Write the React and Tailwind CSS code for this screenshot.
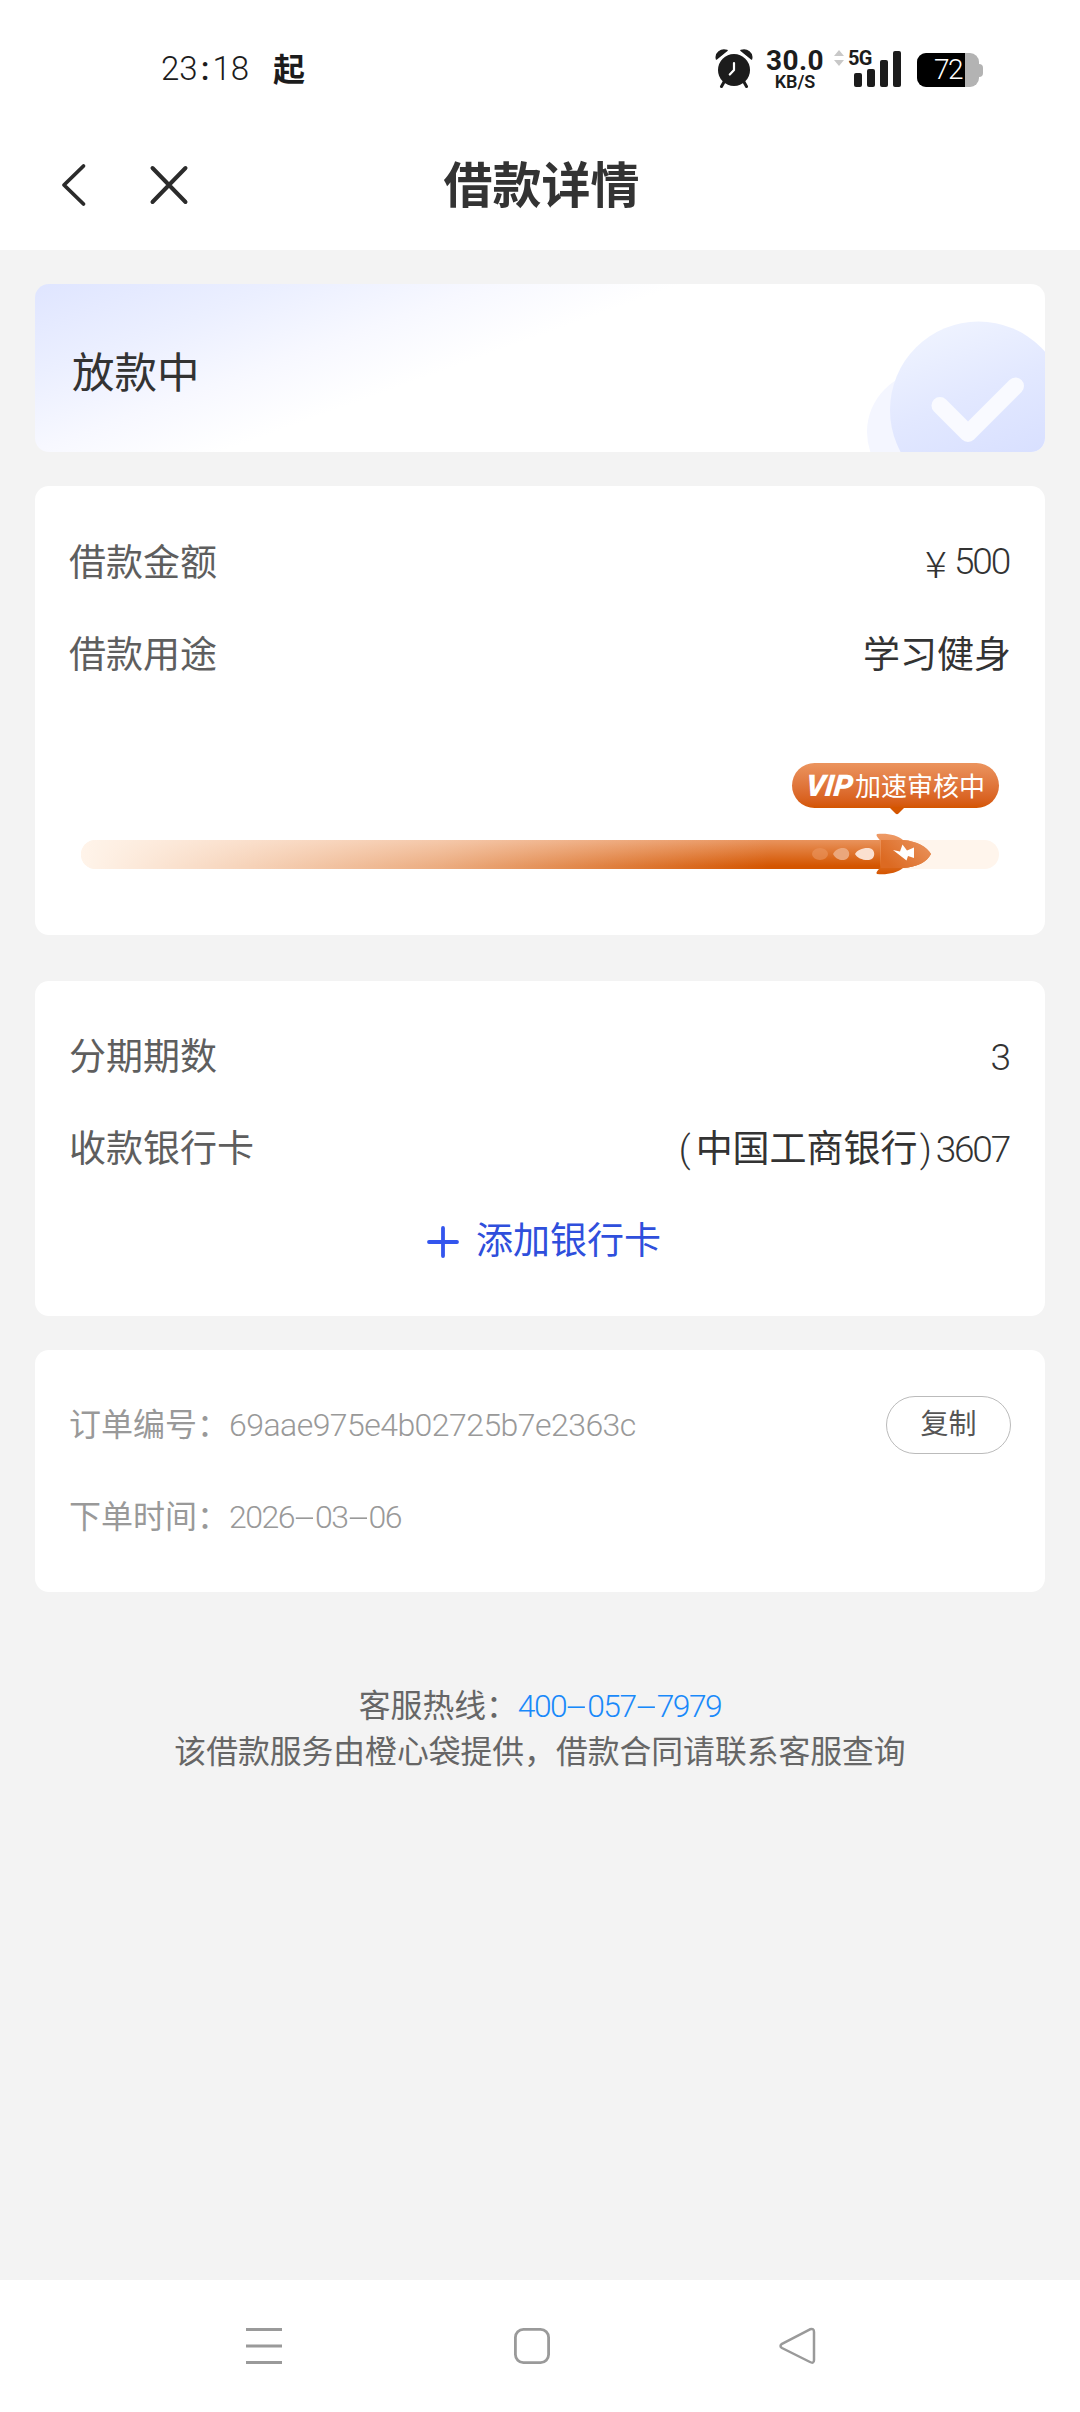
function StatusBar() {
  return (
    <div className="flex h-[120px] items-start font-light text-[#1c1c1c]">
      <div className="mt-[45px] ml-[161px] flex w-[88px] items-center text-[33px] leading-[48px]">
        <span>23</span>
        <span className="w-[17px] text-center font-medium">:</span>
        <span>18</span>
      </div>
      <span className="mt-[50px] ml-[24px] text-[32px] leading-[40px] font-bold">起</span>
      <svg className="mt-[48px] ml-[410px] h-[40px] w-[38px]" viewBox="0 0 38 40" fill="none">
        <path d="M1.500 11C0 5 6 .5 12 2.500Z M36.500 11C38 5 32 .5 26 2.500Z" fill="#1c1c1c" stroke="#1c1c1c" strokeWidth="1.500" strokeLinejoin="round" />
        <circle cx="19" cy="22" r="16" fill="#1c1c1c" />
        <path d="M9 34L6.500 38.500M29 34L31.500 38.500" stroke="#1c1c1c" strokeWidth="3" strokeLinecap="round" />
        <path d="M19 15V22L14.800 26.500" stroke="#fff" strokeWidth="2.200" strokeLinecap="round" strokeLinejoin="round" />
      </svg>
      <div className="mt-[49px] ml-[11px] flex w-[62px] flex-col items-center font-bold">
        <span className="text-[28px] leading-[24px] tracking-[0.4px]">30.0</span>
        <span className="text-[18px] leading-[17px] font-semibold">KB/S</span>
      </div>
      <svg className="mt-[50px] ml-[7px] h-[16px] w-[12px]" viewBox="0 0 12 16" fill="#c8c8c8">
        <path d="M6 0L11 6H1ZM6 16L11 10H1Z" />
      </svg>
      <div className="relative mt-[50px] ml-[3px] h-[38px] w-[54px]">
        <span className="absolute top-0 left-0 text-[20px] leading-[17px] font-bold tracking-[-0.8px]">5G</span>
        <div className="flex h-[37px] items-end gap-[5px] pl-[6px]">
          <div className="h-[14px] w-[8px] rounded-[2px] bg-[#1c1c1c]" />
          <div className="h-[18px] w-[8px] rounded-[2px] bg-[#1c1c1c]" />
          <div className="h-[27px] w-[8px] rounded-[2px] bg-[#1c1c1c]" />
          <div className="h-[36px] w-[8px] rounded-[2px] bg-[#1c1c1c]" />
        </div>
      </div>
      <div className="mt-[53px] ml-[15px] flex items-center">
        <div className="flex h-[34px] w-[62px] overflow-hidden rounded-[9px] bg-[#b3b3b3]">
          <div className="flex w-[48px] items-center justify-end bg-black pr-[3px] text-[28px] tracking-[-1.5px] text-white">72</div>
        </div>
        <div className="h-[13px] w-[4px] rounded-r-[4px] bg-[#b3b3b3]" />
      </div>
    </div>
  );
}

function TitleBar() {
  return (
    <div className="grid h-[130px] grid-cols-3 items-start text-[#333]">
      <div className="flex pt-[43px] pl-[60px]">
        <svg className="h-[44px] w-[28px]" viewBox="0 0 28 44" fill="none" stroke="#2b2b2b" strokeWidth="3.800" strokeLinecap="round" strokeLinejoin="round">
          <path d="M23.500 3L4 22L23.500 41" />
        </svg>
        <svg className="ml-[60px] h-[44px] w-[42px]" viewBox="0 0 42 44" fill="none" stroke="#2b2b2b" strokeWidth="4" strokeLinecap="round">
          <path d="M4.500 5L37.500 39M37.500 5L4.500 39" />
        </svg>
      </div>
      <h1 className="pt-[31px] pl-[3px] text-center text-[49px] leading-[72px] font-bold">借款详情</h1>
    </div>
  );
}

function StatusBanner() {
  return (
    <section className="relative flex h-[168px] items-center overflow-hidden rounded-[14px] bg-[linear-gradient(160deg,#dfe5ff_0%,#ebefff_17%,#f7f8ff_31%,#ffffff_44%)] pl-[37px]">
      <span className="pt-[11px] text-[42.5px] leading-[60px] text-[#333]">放款中</span>
      <svg className="absolute right-0 bottom-0 h-[168px] w-[190px]" viewBox="855 284 190 168" fill="none">
        <defs>
          <linearGradient id="disc" x1="0.2" y1="0" x2="0.6" y2="1">
            <stop offset="0" stopColor="#f0f4ff" />
            <stop offset="0.45" stopColor="#e2e8ff" />
            <stop offset="1" stopColor="#d5ddff" />
          </linearGradient>
        </defs>
        <circle cx="927.500" cy="432" r="60.500" fill="#f4f6ff" />
        <circle cx="978.500" cy="410" r="88.500" fill="url(#disc)" />
        <path d="M940 405.500L968 433.500L1015.500 386" stroke="#f9faff" strokeWidth="17" strokeLinecap="round" strokeLinejoin="round" />
      </svg>
    </section>
  );
}

function Row({ label, children }) {
  return (
    <div className="flex h-[92px] items-center justify-between">
      <span className="text-[#5e5e5e]">{label}</span>
      <span className="text-[#333]">{children}</span>
    </div>
  );
}

function Dash() {
  return <span className="inline-block w-[21px] scale-x-[2.3] text-center tracking-normal">-</span>;
}

function ReviewProgress() {
  return (
    <div className="relative mx-[12px] mt-[61px]">
      <div className="ml-auto flex h-[45px] w-[207px] items-center justify-center rounded-full bg-linear-to-b from-[#eb945e] to-[#d45500] text-[26px] whitespace-nowrap text-white">
        <span className="mr-[2px] inline-block -skew-x-6 text-[30px] font-black italic">VIP</span>
        <span className="pt-[4px]">加速审核中</span>
      </div>
      <svg className="absolute top-[44px] right-[94px] h-[8px] w-[16px]" viewBox="0 0 16 8" fill="#d45500">
        <path d="M0 0H16L9.500 6.500Q8 8 6.500 6.500Z" />
      </svg>
      <div className="mt-[32px] flex h-[29px] rounded-full bg-[#fff5ec]">
        <div className="h-full w-[804px] rounded-l-full bg-[linear-gradient(to_right,#fff4ea_0%,rgba(255,244,234,0.55)_45%,rgba(255,244,234,0)_86%),linear-gradient(to_bottom,#e9935c,#d45500_90%)]" />
      </div>
      <svg className="absolute right-[66px] bottom-[-7px] h-[44px] w-[124px]" viewBox="0 0 124 44" fill="none">
        <defs>
          <linearGradient id="rocket" x1="0" y1="0" x2="0" y2="1">
            <stop offset="0" stopColor="#ee9a66" />
            <stop offset="0.5" stopColor="#e58344" />
            <stop offset="1" stopColor="#d45500" />
          </linearGradient>
          <linearGradient id="hull" x1="1" y1="0" x2="0" y2="0.6">
            <stop offset="0" stopColor="#ea9560" />
            <stop offset="1" stopColor="#dc6a22" />
          </linearGradient>
        </defs>
        <ellipse cx="11" cy="22" rx="8" ry="6" fill="#e9935c" opacity="0.65" />
        <path d="M24 22C26 18 30 15.500 35 16C42 17 42 27 35 28C30 28.500 26 26 24 22Z" fill="#eba77c" />
        <path d="M46 22C48 18 54 15.500 60 16C67 16.500 67 27.500 60 28C54 28.500 48 26 46 22Z" fill="#fbe0d0" />
        <path d="M68 2C79 1 88 3 94 8C108 9 118 15 122 22C118 30 108 35 94 36C88 41 78 43 68 42C66 40 71 37 71 35V9C71 7 66 4 68 2Z" fill="url(#rocket)" />
        <path d="M72 8H94C108 9 118 15 122 22C118 30 108 35 94 36H72Z" fill="url(#hull)" />
        <path d="M84 18L91 19.500L93.500 12.500L98 18.500L105 15.500V26L99 24L97.500 28.500Z" fill="#fff" />
      </svg>
    </div>
  );
}

function NavBar() {
  return (
    <nav className="mt-auto flex h-[132px] items-start bg-white pt-[46px] pl-[245px]">
      <svg className="h-[40px] w-[38px]" viewBox="0 0 38 40" stroke="#9a9a9a" strokeWidth="3">
        <path d="M1 3.500H37M1 20H37M1 36.500H37" />
      </svg>
      <svg className="ml-[229px] h-[40px] w-[40px]" viewBox="0 0 40 40" fill="none" stroke="#9a9a9a" strokeWidth="2.800">
        <rect x="3.400" y="3.400" width="33.200" height="33.200" rx="8" />
      </svg>
      <svg className="ml-[226px] h-[40px] w-[40px]" viewBox="0 0 40 40" fill="none" stroke="#9a9a9a" strokeWidth="2.500" strokeLinejoin="round">
        <path d="M4 17.800L32 3.300Q36 2 36 6V34Q36 38 32 36L4 22Q1 20 4 17.800Z" />
      </svg>
    </nav>
  );
}

export default function App() {
  return (
    <div className="flex h-[2412px] w-[1080px] flex-col overflow-hidden bg-[#f3f3f3] font-['Roboto','Noto_Sans_CJK_SC',sans-serif]">
      <header className="bg-white">
        <StatusBar />
        <TitleBar />
      </header>
      <main className="flex flex-col px-[35px] pt-[34px]">
        <StatusBanner />
        <section className="mt-[34px] h-[449px] rounded-[14px] bg-white px-[34px] pt-[32px] text-[37px]">
          <Row label="借款金额">
            <span className="flex items-center pb-[5px] font-light">
              <span className="mr-[8px] inline-block scale-x-110 font-['Noto_Sans_CJK_SC',sans-serif] leading-[48px]">¥</span>
              <span className="mr-[2px] tracking-[-2.2px]">500</span>
            </span>
          </Row>
          <Row label="借款用途">学习健身</Row>
          <ReviewProgress />
        </section>
        <section className="mt-[46px] h-[335px] rounded-[14px] bg-white px-[34px] pt-[31px] text-[37px]">
          <Row label="分期期数"><span className="font-light">3</span></Row>
          <Row label="收款银行卡">
            <span className="mr-[5px] font-light">(</span>
            中国工商银行
            <span className="mr-[4px] ml-[2px] font-light">)</span>
            <span className="mr-[2px] font-light tracking-[-2.2px]">3607</span>
          </Row>
          <button className="flex h-[92px] w-full items-center justify-center pl-[8px] text-[#2f4fdc]">
            <svg className="mr-[17px] h-[32px] w-[32px]" viewBox="0 0 32 32" stroke="#3355ee" strokeWidth="3.800" strokeLinecap="round">
              <path d="M16 2V30M2 16H30" />
            </svg>
            添加银行卡
          </button>
        </section>
        <section className="mt-[34px] h-[242px] rounded-[14px] bg-white px-[34px] pt-[29px] text-[32px] text-[#999]">
          <div className="flex h-[92px] items-center">
            <span>订单编号：</span>
            <span className="font-light tracking-[-0.55px]">69aae975e4b02725b7e2363c</span>
            <button className="ml-auto flex h-[58px] w-[125px] items-center justify-center rounded-full border-[1.5px] border-[#bbb] text-[28px] text-[#555]">复制</button>
          </div>
          <div className="flex h-[92px] items-center">
            <span>下单时间：</span>
            <span className="font-light tracking-[-1.5px]">2026<Dash />03<Dash />06</span>
          </div>
        </section>
        <footer className="mt-[91px] text-center text-[31.8px] leading-[46px] text-[#666]">
          <p>
            客服热线：
            <span className="font-light tracking-[-1.5px] text-[#1989fa]">400<Dash />057<Dash />7979</span>
          </p>
          <p>该借款服务由橙心袋提供，借款合同请联系客服查询</p>
        </footer>
      </main>
      <NavBar />
    </div>
  );
}
